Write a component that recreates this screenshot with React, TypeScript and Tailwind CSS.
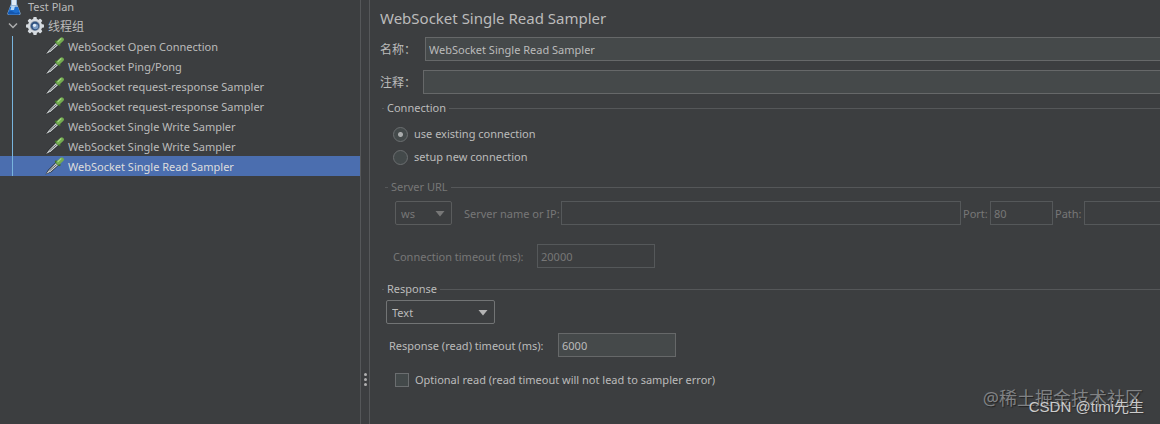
import { useState } from 'react';
import clsx from 'clsx';

const samplers = [
  'WebSocket Open Connection',
  'WebSocket Ping/Pong',
  'WebSocket request-response Sampler',
  'WebSocket request-response Sampler',
  'WebSocket Single Write Sampler',
  'WebSocket Single Write Sampler',
  'WebSocket Single Read Sampler',
];

function FlaskIcon() {
  return (
    <svg width="16" height="20" viewBox="0 0 16 20" className="shrink-0">
      <path d="M5 1h6v7l3.500 9q.5 2-1.500 2H3q-2 0-1.500-2L5 8z" fill="#93b4d6" />
      <path d="M6 1h4v8H6z" fill="#dfeaf5" />
      <path d="M4 11h8l2 6q.3 1.500-1.500 1.500h-9q-1.800 0-1.500-1.500z" fill="#1d6fd0" />
      <path d="M2.500 16q2.500-2 5 0t5 0l1 1.500q0 1-1 1h-9.500q-1 0-1-1z" fill="#1456ae" />
      <path d="M5.500 10h3.500l-1 4h-3.500z" fill="#b4d7f7" />
    </svg>
  );
}

function GearIcon() {
  return (
    <svg width="18" height="18" viewBox="0 0 18 18" className="shrink-0">
      <g fill="#d6dbe0">
        <circle cx="9" cy="9" r="7.200" />
        {[0, 45, 90, 135].map((angle) => (
          <rect key={angle} x="7.200" y="0" width="3.600" height="18" rx="1" transform={`rotate(${angle} 9 9)`} />
        ))}
      </g>
      <circle cx="9" cy="9" r="5" fill="#8895a6" />
      <circle cx="9" cy="9" r="4.200" fill="#315482" />
      <circle cx="9.500" cy="9.500" r="2.800" fill="#7b9cc3" />
      <circle cx="8.500" cy="8.300" r="1.600" fill="#e2edf8" />
    </svg>
  );
}

function PipetteIcon() {
  return (
    <svg width="20" height="18" viewBox="0 0 20 18" className="shrink-0">
      <path d="M0.500 17.500 L3 13 L11 5 L14 8 L6.500 15z" fill="#232628" />
      <path d="M1 17 L4 13 L11 6 L13.200 8 L6 14.500z" fill="#cfd3d4" />
      <path d="M4.500 13.800 L11.700 7.500" stroke="#5e6467" strokeWidth="1" />
      <path d="M11 4.500 L14.500 8" stroke="#3f7429" strokeWidth="2.400" strokeLinecap="round" />
      <path d="M13.500 5.500 L16.700 2.500" stroke="#73ac50" strokeWidth="4.400" strokeLinecap="round" />
      <path d="M13 4.500 L16 1.800" stroke="#a8d889" strokeWidth="1.200" strokeLinecap="round" />
    </svg>
  );
}

type DropdownProps = {
  label: string;
  options: string[];
  disabled?: boolean;
  className: string;
};

function Dropdown({ label, options, disabled, className }: DropdownProps) {
  return (
    <div className={clsx('relative h-6', className)}>
      <select
        aria-label={label}
        disabled={disabled}
        className={clsx(
          'w-full h-full appearance-none rounded-xs border pl-[5px] pt-px opacity-100',
          disabled ? 'border-[#5a5c5d] text-[#777777]' : 'border-[#727475]'
        )}
      >
        {options.map((option) => (
          <option key={option}>{option}</option>
        ))}
      </select>
      <svg
        width="10"
        height="6"
        viewBox="0 0 10 6"
        className={clsx(
          'absolute right-[7px] top-[10px] pointer-events-none',
          disabled ? 'text-[#777777]' : 'text-[#b4b4b4]'
        )}
      >
        <path d="M0.500 0h9L5 5.500z" fill="currentColor" />
      </svg>
    </div>
  );
}

const field = 'h-6 min-w-0 border border-[#666869] bg-[#45494a] px-[3px] pt-px';
const disabledField = 'h-6 min-w-0 border border-[#55585a] px-[3px] pt-px';
const radio =
  'appearance-none size-[15px] rounded-full border border-[#6b6e70] bg-[#43494a] checked:bg-[radial-gradient(circle,#a9abac_2px,transparent_3px)]';

export default function App() {
  const [selected, setSelected] = useState(6);
  const [mode, setMode] = useState('existing');

  return (
    <div className="relative flex min-h-screen overflow-hidden bg-[#3c3e40] text-[11px] leading-4 text-[#bbbbbb] font-['Noto_Sans','Noto_Sans_CJK_SC',sans-serif]">
      <nav className="w-[360px] shrink-0">
        <div className="-mt-1 flex h-5 items-center gap-[6px] pl-[6px]">
          <FlaskIcon />
          <span className="pt-[2px]">Test Plan</span>
        </div>
        <div className="flex h-5 items-center pl-2">
          <button aria-label="Collapse" className="mr-2">
            <svg width="10" height="8" viewBox="0 0 10 8">
              <path d="M1 1.500l4 4 4-4" fill="none" stroke="#adadad" strokeWidth="1.500" />
            </svg>
          </button>
          <GearIcon />
          <span className="ml-1 pt-[2px] text-[12px]">线程组</span>
        </div>
        <ul className="relative">
          {samplers.map((name, i) => (
            <li key={i}>
              <button
                onClick={() => setSelected(i)}
                className={clsx(
                  'flex h-5 w-full items-center gap-[3px] pl-[45px] text-left',
                  selected === i && 'bg-[#4b6eaf] text-[#dddddd]'
                )}
              >
                <PipetteIcon />
                <span className="pt-[2px]">{name}</span>
              </button>
            </li>
          ))}
          <li aria-hidden="true" className="absolute inset-y-0 left-3 w-px bg-[#78b4dc]" />
        </ul>
      </nav>

      <div className="flex w-[10px] shrink-0 flex-col items-center justify-end gap-[2px] border-x border-[#555759] pb-[38px]">
        <span className="size-[3px] rounded-full bg-[#b0b0b0]" />
        <span className="size-[3px] rounded-full bg-[#b0b0b0]" />
        <span className="size-[3px] rounded-full bg-[#b0b0b0]" />
      </div>

      <main className="min-w-0 flex-1 pl-[10px] pt-2">
        <h1 className="text-[15px] leading-5">WebSocket Single Read Sampler</h1>
        <div className="mt-[9px] flex items-center">
          <label htmlFor="name" className="w-[45px] pt-[2px] text-[12px]">名称：</label>
          <input id="name" defaultValue="WebSocket Single Read Sampler" className={clsx(field, 'flex-1 border-r-0')} />
        </div>
        <div className="mt-[9px] flex items-center">
          <label htmlFor="comments" className="w-[43px] pt-[2px] text-[12px]">注释：</label>
          <input id="comments" className={clsx(field, 'flex-1 border-r-0')} />
        </div>

        <fieldset className="ml-[2px] mt-[6px] border-t border-[#555759]">
          <legend className="ml-[2px] px-[3px]">Connection</legend>
          <div className="flex flex-col gap-[7px] pl-[11px] pt-[10px]">
            <label className="flex items-center gap-[6px]">
              <input type="radio" name="mode" className={radio} checked={mode === 'existing'} onChange={() => setMode('existing')} />
              use existing connection
            </label>
            <label className="flex items-center gap-[6px]">
              <input type="radio" name="mode" className={radio} checked={mode === 'new'} onChange={() => setMode('new')} />
              setup new connection
            </label>
          </div>

          <fieldset disabled className="ml-[3px] mt-[14px] border-t border-[#555759] text-[#777777]">
            <legend className="ml-[3px] px-[3px]">Server URL</legend>
            <div className="mt-[6px] flex items-center pl-[10px]">
              <Dropdown label="Protocol" options={['ws', 'wss']} disabled className="w-[57px]" />
              <label htmlFor="server" className="ml-3 w-[97px] whitespace-nowrap pt-px">Server name or IP:</label>
              <input id="server" className={clsx(disabledField, 'flex-1')} />
              <label htmlFor="port" className="w-[29px] pl-[2px] pt-px">Port:</label>
              <input id="port" defaultValue="80" className={clsx(disabledField, 'w-[63px]')} />
              <label htmlFor="path" className="w-[31px] pl-[2px] pt-px">Path:</label>
              <input id="path" className={clsx(disabledField, 'w-[76px] border-r-0')} />
            </div>
            <div className="mt-[19px] flex items-center pl-2">
              <label htmlFor="connect-timeout" className="w-36 pt-px">Connection timeout (ms):</label>
              <input id="connect-timeout" defaultValue="20000" className={clsx(disabledField, 'w-[118px]')} />
            </div>
          </fieldset>
        </fieldset>

        <fieldset className="ml-[2px] mt-[13px] border-t border-[#555759]">
          <legend className="ml-[2px] px-[3px]">Response</legend>
          <Dropdown label="Response type" options={['Text', 'Binary']} className="ml-1 mt-[3px] w-[109px]" />
          <div className="mt-[9px] flex items-center pl-[7px]">
            <label htmlFor="read-timeout" className="w-[169px] pt-px">Response (read) timeout (ms):</label>
            <input id="read-timeout" defaultValue="6000" className={clsx(field, 'w-[118px]')} />
          </div>
          <label className="mt-[15px] flex w-fit items-center gap-[6px] pl-[13px]">
            <input type="checkbox" className="size-[14px] appearance-none border border-[#6b6e70] bg-[#43494a] checked:bg-[#a9abac]" />
            Optional read (read timeout will not lead to sampler error)
          </label>
        </fieldset>
      </main>

      <p className="absolute bottom-[14px] right-[17px] text-[18px] leading-6 text-[#808284] [text-shadow:1px_1px_1px_#222222]">@稀土掘金技术社区</p>
      <p className="absolute bottom-[9px] right-[16px] text-[15px] leading-4 text-[#cccccc] [text-shadow:1px_1px_1px_#333333] font-['Liberation_Sans','Noto_Sans_CJK_SC',sans-serif]">CSDN @timi先生</p>
    </div>
  );
}
